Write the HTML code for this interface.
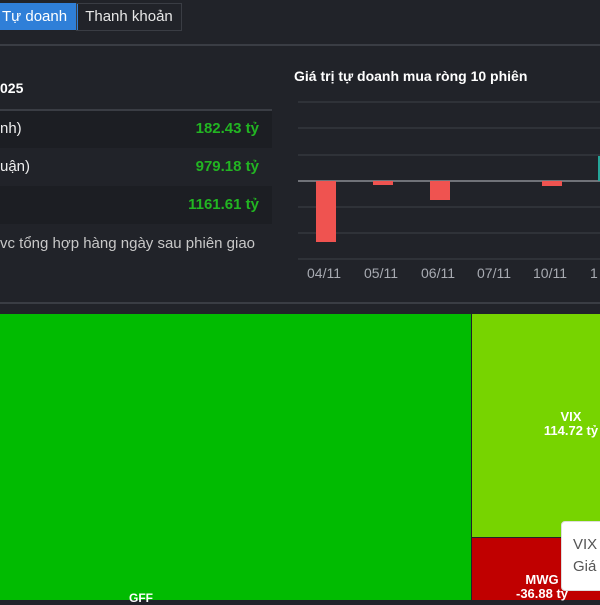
<!DOCTYPE html>
<html><head><meta charset="utf-8"><style>
body{margin:0;width:600px;height:600px;overflow:hidden;background:#212329;font-family:"Liberation Sans",sans-serif;position:relative}
.a{position:absolute}
</style></head><body>
<div class="a" style="left:0;top:0;width:600px;height:44px;background:#212329;border-bottom:2px solid #3a3d44"></div>
<div class="a" style="left:0;top:3px;width:76px;height:27px;background:#2f7fd8;color:#fff;font-size:15px;line-height:27px;padding-left:2px">Tự doanh</div>
<div class="a" style="left:76px;top:3px;width:104px;height:26px;border:1px solid #3a3d44;color:#e6e6e6;font-size:15px;line-height:26px;text-align:center">Thanh khoản</div>
<div class="a" style="left:0;top:80px;color:#fff;font-weight:bold;font-size:14px">025</div>
<div class="a" style="left:0;top:109px;width:272px;height:2px;background:#3a3d44"></div>
<div class="a" style="left:0;top:111px;width:272px;height:37px;background:#1c1e23"></div>
<div class="a" style="left:0;top:186px;width:272px;height:38px;background:#1c1e23"></div>
<div class="a" style="left:0;top:120px;color:#eee;font-size:15px">nh)</div>
<div class="a" style="left:0;top:158px;color:#eee;font-size:15px">uận)</div>
<div class="a" style="right:341px;top:120px;color:#22b522;font-weight:bold;font-size:15px">182.43 tỷ</div>
<div class="a" style="right:341px;top:158px;color:#22b522;font-weight:bold;font-size:15px">979.18 tỷ</div>
<div class="a" style="right:341px;top:196px;color:#22b522;font-weight:bold;font-size:15px">1161.61 tỷ</div>
<div class="a" style="left:0;top:235px;color:#c8c8c8;font-size:15px;white-space:nowrap">vc tổng hợp hàng ngày sau phiên giao</div>
<div class="a" style="left:294px;top:68px;color:#fff;font-weight:bold;font-size:14px">Giá trị tự doanh mua ròng 10 phiên</div>
<svg class="a" style="left:0;top:0" width="600" height="600">
<g stroke="#34373e" stroke-width="1.5">
<line x1="298" y1="102" x2="600" y2="102"/><line x1="298" y1="128" x2="600" y2="128"/><line x1="298" y1="155" x2="600" y2="155"/><line x1="298" y1="207" x2="600" y2="207"/><line x1="298" y1="233" x2="600" y2="233"/><line x1="298" y1="259" x2="600" y2="259"/></g>
<line x1="298" y1="181" x2="600" y2="181" stroke="#8a8d93" stroke-width="1.5"/>
<rect x="316" y="181" width="20" height="61" fill="#ef5350"/>
<rect x="373" y="181" width="20" height="4" fill="#ef5350"/>
<rect x="430" y="181" width="20" height="19" fill="#ef5350"/>
<rect x="542" y="181" width="20" height="5" fill="#ef5350"/>
<rect x="598" y="156" width="3" height="25" fill="#26a69a"/>
<g fill="#a8abb2" font-size="14" font-family="Liberation Sans">
<text x="307" y="278">04/11</text><text x="364" y="278">05/11</text><text x="421" y="278">06/11</text><text x="477" y="278">07/11</text><text x="533" y="278">10/11</text><text x="590" y="278">1</text></g>
</svg>
<div class="a" style="left:0;top:302px;width:600px;height:2px;background:#3a3d44"></div>
<div class="a" style="left:0;top:314px;width:471px;height:286px;background:#01bb01"></div>
<div class="a" style="left:472px;top:314px;width:128px;height:223px;background:#77d400"></div>
<div class="a" style="left:472px;top:538px;width:128px;height:62px;background:#c00000"></div>
<div class="a" style="left:129px;top:591px;color:#fff;font-weight:bold;font-size:12px">GFF</div>
<div class="a" style="left:521px;top:410px;color:#fff;font-weight:bold;font-size:13px;text-align:center;line-height:14px;width:100px">VIX<br>114.72 tỷ</div>
<div class="a" style="left:516px;top:573px;color:#fff;font-weight:bold;font-size:13px;line-height:14px;text-align:center">MWG<br>-36.88 tỷ</div>
<div class="a" style="left:561px;top:521px;width:50px;height:70px;background:#fff;border-radius:4px;border:1px solid #ddd;color:#555;font-size:15px;padding:12px 0 0 11px;line-height:22px;box-sizing:border-box">VIX<br>Giá</div>
</body></html>
